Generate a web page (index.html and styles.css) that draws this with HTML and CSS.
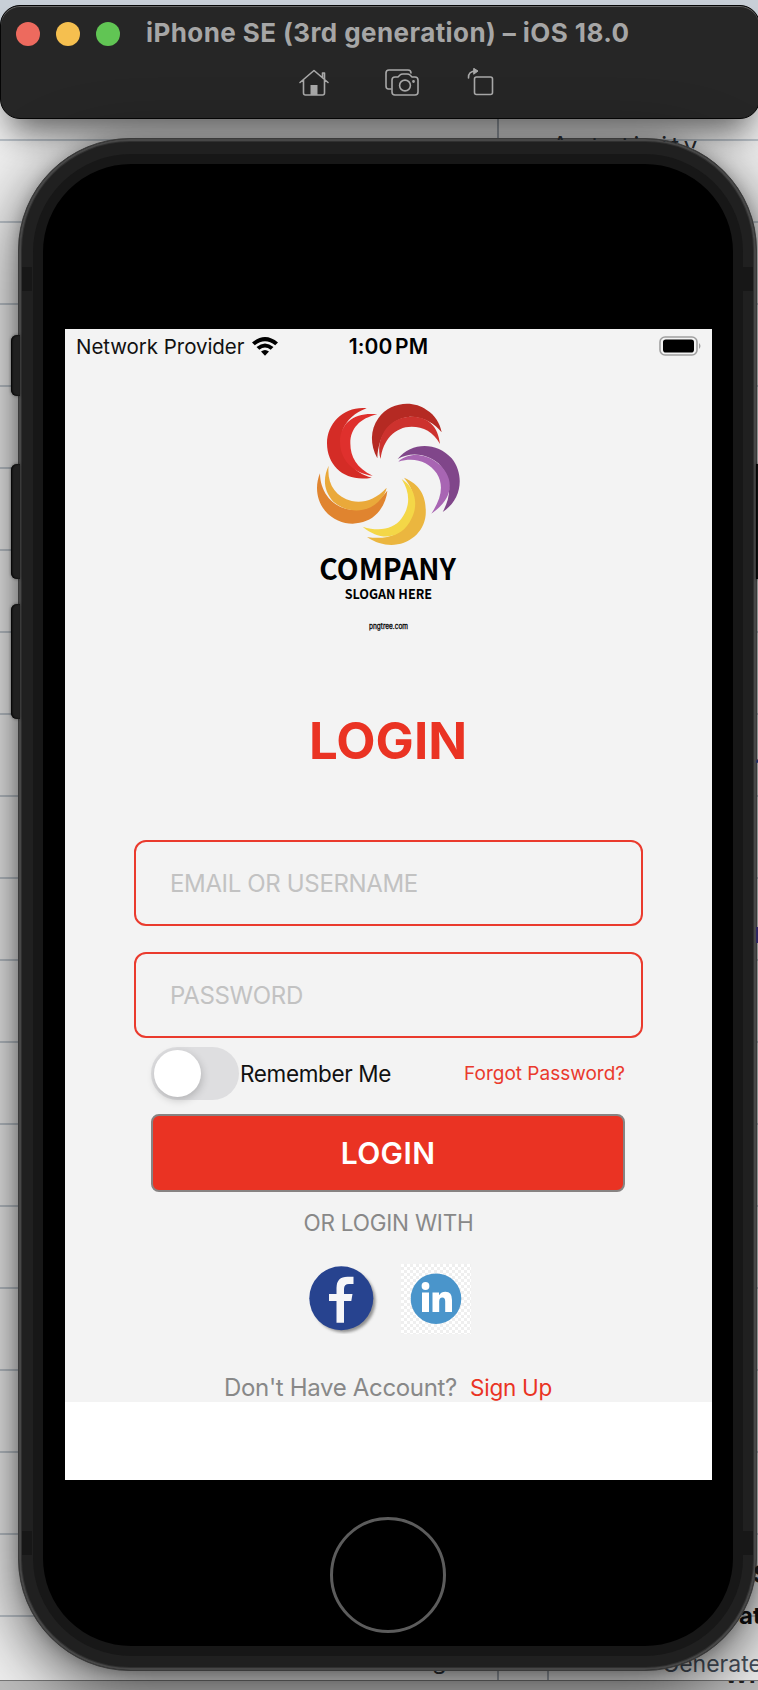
FILE: index.html
```html
<!DOCTYPE html>
<html lang="en">
<head>
<meta charset="utf-8">
<title>iPhone SE Simulator</title>
<link rel="stylesheet" href="styles.css">
</head>
<body>
<div class="desktop">
  <div class="backdrop">
    <i class="vline v1"></i><i class="vline v2"></i><i class="vline v3"></i>
    <span class="behind b4">at</span>
    <span class="behind b5">Generate</span>
    <span class="behind b6">g</span>
    <span class="strip"><span class="b7">Wh</span></span>
  </div>
  <span class="behind b1">Autotivity</span>
  <span class="behind b2">?</span>
  <span class="behind b3">S</span>
  <i class="mark"></i>
  <header class="toolbar">
    <div class="titlebar">
      <i class="dot red"></i><i class="dot yellow"></i><i class="dot green"></i>
      <span class="title">iPhone SE (3rd generation) – iOS 18.0</span>
    </div>
    <div class="tools">
      <svg width="32" height="30" viewBox="0 0 32 30" fill="none" stroke="#a9a9a9" stroke-width="1.6" stroke-linecap="round" stroke-linejoin="round"><path d="M2 14.500L16 2.500l14 12M5.500 12v13q0 2 2 2h17q2 0 2-2V12M24.500 9.500V5h2v6.500"/><path d="M12.500 17h7v10h-7z" fill="#a9a9a9" stroke="none"/></svg>
      <svg width="34" height="30" viewBox="0 0 34 30" fill="none" stroke="#a9a9a9" stroke-width="1.6" stroke-linecap="round" stroke-linejoin="round"><path d="M6 21H3.500Q1 21 1 18V5q0-3 3-3h19q3 0 3 3"/><path d="M10 9h3l2-2q1-1 3-1h4q2 0 3 1l2 2h3q3 0 3 3v12q0 3-3 3H10q-3 0-3-3V12q0-3 3-3z"/><circle cx="20" cy="17.500" r="5.400"/><circle cx="28.500" cy="13.500" r=".6" fill="#a9a9a9"/></svg>
      <svg width="28" height="30" viewBox="0 0 28 30" fill="none" stroke="#a9a9a9" stroke-width="1.6" stroke-linecap="round" stroke-linejoin="round"><path d="M1.500 10Q1 3 9 3"/><path d="M7 .5L11 3 7 6z" fill="#a9a9a9" stroke-width="1"/><rect x="7.500" y="9" width="18" height="17.500" rx="2"/></svg>
    </div>
  </header>
  <div class="phone">
    <i class="side k1"></i><i class="side k2"></i><i class="side k3"></i><i class="side k4"></i>
    <i class="band l t"></i><i class="band r t"></i><i class="band l b"></i><i class="band r b"></i>
    <div class="body">
      <main class="screen">
        <div class="status">
          <div class="carrier"><span class="net">Network Provider</span>
            <svg width="26" height="19" viewBox="0 0 26 19"><path d="M0 5.500Q13-5.500 26 5.500L23.200 8.300Q13 .2 2.800 8.300zM4.500 10Q13 3 21.500 10L18.700 12.800Q13 8.300 7.300 12.800zM9 14.500Q13 11.500 17 14.500L13 18.700z"/></svg>
          </div>
          <span class="time">1:00 PM</span>
          <svg class="battery" width="43" height="20" viewBox="0 0 43 20"><rect x="1" y="1" width="37" height="18" rx="5" fill="none" stroke="#a0a0a0" stroke-width="1.600"/><rect x="4" y="3.500" width="31" height="13" rx="2.800"/><path d="M40 7q3 3 0 6z" fill="#a0a0a0"/></svg>
        </div>
        <svg class="logo" viewBox="0 0 600 750">
          <path fill="#d42c26" d="M230 55C165 48 111 98 111 160C111 232 170 278 245 263C195 250 150 210 158 120C170 90 195 68 230 55"/>
          <path fill="#df302d" d="M262 73C200 65 150 95 150 155C150 210 190 250 248 257C200 235 181 200 181 160C181 115 210 85 262 73"/>
          <path fill="#b52a23" d="M262 205C240 165 240 120 265 85C300 35 370 30 410 60C435 75 450 100 455 127C435 100 400 80 360 80C305 85 265 130 262 205"/>
          <path fill="#cd322e" d="M272 207C255 150 290 80 365 80C415 80 445 110 450 162C430 125 400 110 365 110C315 110 278 150 272 207"/>
          <path fill="#80468a" d="M323 207C365 155 440 155 485 205C525 255 515 330 458 366C490 310 480 255 445 220C410 190 360 185 323 207"/>
          <path fill="#a865b3" d="M325 215C350 190 400 187 440 217C490 255 500 320 424 371C455 325 462 285 440 250C415 215 375 200 325 215"/>
          <path fill="#ebb63f" d="M342 263C395 285 410 325 407 375C400 450 310 495 231 441C290 450 330 435 355 395C380 350 378 305 342 263"/>
          <path fill="#f4d747" d="M335 267C378 295 385 345 365 385C340 440 280 462 218 410C265 425 310 420 335 385C360 350 362 310 335 267"/>
          <path fill="#e0842f" d="M90 250C75 285 78 330 105 362C150 415 225 410 262 370C280 350 290 325 292 302C260 345 215 365 170 357C120 345 90 300 90 250"/>
          <path fill="#eaa93a" d="M116 227C100 260 98 300 130 335C170 370 230 370 265 335C280 320 288 305 290 293C255 330 220 340 185 333C135 320 110 280 116 227"/>
          <text class="company" x="88" y="570" textLength="410" lengthAdjust="spacingAndGlyphs">COMPANY</text>
          <text class="slogan" x="164" y="626" textLength="262" lengthAdjust="spacingAndGlyphs">SLOGAN HERE</text>
          <text class="credit" x="237" y="716" textLength="117" lengthAdjust="spacingAndGlyphs">pngtree.com</text>
        </svg>
        <h1 class="heading">LOGIN</h1>
        <div class="fields">
          <div class="field"><span class="ph1">EMAIL OR USERNAME</span></div>
          <div class="field"><span class="ph2">PASSWORD</span></div>
        </div>
        <div class="options">
          <span class="switch"><i class="knob"></i></span>
          <span class="remember">Remember Me</span>
          <span class="forgot">Forgot Password?</span>
        </div>
        <div class="submit"><span class="submit-label">LOGIN</span></div>
        <div class="or"><span class="or-label">OR LOGIN WITH</span></div>
        <div class="social">
          <svg width="70" height="70" viewBox="0 0 70 70"><defs><filter id="s" x="-20%" y="-20%" width="140%" height="140%"><feGaussianBlur stdDeviation="1.6"/></filter></defs><circle cx="35" cy="37" r="31.500" fill="#777" opacity=".8" filter="url(#s)"/><circle cx="32.300" cy="34.300" r="32" fill="#27438f"/><path fill="#f6f6f8" d="M27.500 58.800V37H20v-7h7.500v-6q0-11.300 11-11.300h6V20H40q-5 0-5 5v5h8.500l-1.200 7H35v21.800z"/></svg>
          <svg width="70" height="70" viewBox="0 0 70 70"><defs><pattern id="c" width="6" height="6" patternUnits="userSpaceOnUse"><path fill="#fff" d="M0 0h6v6H0z"/><path fill="#efefef" d="M3 0h3v3H3zM0 3h3v3H0z"/></pattern></defs><path fill="url(#c)" d="M0 0h70v70H0z"/><circle cx="35" cy="34.700" r="25.300" fill="#4a95cb"/><circle cx="24.500" cy="22" r="3.900" fill="#fff"/><path fill="#fff" d="M21 28.500h7V48h-7zM31.500 28.500h6.500v2.700q2.200-3.400 6.500-3.400 6.500 0 6.500 8.200v12h-6.800V37.500q0-4-2.800-4-3.200 0-3.200 4V48h-6.700z"/></svg>
        </div>
        <div class="signup"><span class="ask">Don't Have Account?</span><span class="link">Sign Up</span></div>
      </main>
      <div class="home"></div>
    </div>
  </div>
</div>
</body>
</html>
```
FILE: styles.css
```css
* { box-sizing: border-box; }
body { margin: 0; font-family: Inter, "Liberation Sans", sans-serif; }
.desktop { display: flow-root; position: relative; width: 758px; height: 1690px; overflow: hidden; background: linear-gradient(#c9d0d8 0 60px, #efefef 60px); }
.backdrop { position: absolute; inset: 0; background: repeating-linear-gradient(transparent 0 57px, #bcc3ca 57px 59px, transparent 59px 82px); }
.vline { position: absolute; width: 2px; background: #a4abb3; top: 119px; height: 25px; left: 497px; }
.v2 { top: 1660px; height: 20px; }
.v3 { top: 1660px; height: 20px; left: 547px; }
.strip { position: absolute; left: 0; right: 0; top: 1680px; height: 10px; background: #bcbcbc; border-top: 1px solid #777; overflow: hidden; }
.b7 { position: absolute; left: 724px; top: -20px; font-weight: 700; font-size: 24px; line-height: 28px; color: #222; }
.behind { position: absolute; font-size: 24px; line-height: 28px; color: #30343a; white-space: nowrap; }
.b1 { left: 552px; top: 132px; z-index: 3; width: 160px; color: #1c2024; letter-spacing: 4.200px; clip-path: polygon(0 0, 100% 0, 100% 22px, 120px 10px, 90px 8px, 0 8px); }
.b2 { left: 755px; top: 754px; color: #1f2f60; z-index: 3; }
.b3 { left: 753px; top: 1561px; font-weight: 700; z-index: 3; color: #111; clip-path: inset(0 0 0 2px); }
.b4 { left: 739px; top: 1602px; font-weight: 700; color: #111; }
.b5 { left: 662px; top: 1650px; color: #47505c; font-size: 23px; }
.b6 { left: 432px; top: 1647px; }
.mark { position: absolute; z-index: 3; left: 756px; top: 927px; width: 2px; height: 16px; background: #2f2860; }

.toolbar { position: relative; width: 760px; height: 114px; margin-top: 5px; padding: 16px; border-radius: 20px; background: #262626; border: 1px solid #050505; box-shadow: inset 0 1px 0 #666, 0 22px 34px -10px rgba(0,0,0,.6); display: flex; flex-direction: column; gap: 17px; }
.titlebar { display: flex; align-items: center; height: 24px; gap: 16px; margin-left: -1px; }
.dot { width: 24px; height: 24px; border-radius: 50%; flex: none; }
.red { background: #ed6a5e; }
.yellow { background: #f5bf4f; }
.green { background: #61c554; }
.title { margin-left: 10px; margin-top: -3px; font-weight: 700; font-size: 26px; color: #a6a6a6; white-space: nowrap; letter-spacing: .42px; }
.tools { display: flex; align-items: center; margin-left: 281px; gap: 55px; height: 30px; margin-top: 5px; }
.tools svg:nth-child(3) { margin-left: -7px; }

.phone { position: relative; width: 739px; height: 1533px; margin: 19px 0 0 18px; border-radius: 112px; background: #202020; border: 1px solid #3a3a3a; padding: 3px; box-shadow: inset 0 0 0 2px #474747, inset 0 0 0 3px #303030, 0 16px 64px rgba(0,0,0,.68), 0 0 14px rgba(0,0,0,.2); }
.body { width: 710px; height: 1502px; margin: 12px 0 0 11px; border: 10px solid #171717; border-radius: 98px; background: #000; padding: 165px 0 0 22px; }
.side { position: absolute; left: -8px; width: 9px; background: #202020; border-radius: 6px 0 0 6px; box-shadow: inset 1px 0 2px #000, 0 0 3px rgba(0,0,0,.5); }
.k1 { top: 196px; height: 61px; }
.k2 { top: 325px; height: 115px; }
.k3 { top: 465px; height: 115px; }
.k4 { top: 325px; height: 115px; left: 737px; border-radius: 0; background: #141414; }
.band { position: absolute; width: 10px; height: 24px; background: #171717; }
.band.l { left: 3px; } .band.r { right: 3px; }
.band.t { top: 128px; } .band.b { top: 1392px; }
.screen { width: 647px; height: 1151px; background: linear-gradient(#f3f3f3 0 1073px, #fff 1073px); display: flex; flex-direction: column; overflow: hidden; }
.status { height: 35px; display: grid; grid-template-columns: 1fr auto 1fr; align-items: center; padding: 0 10px 0 11px; color: #111; flex: none; }
.carrier { display: flex; gap: 8px; align-items: center; }
.net { font-size: 20.500px; letter-spacing: -.05px; white-space: nowrap; }
.time { font-weight: 600; font-size: 21px; white-space: nowrap; word-spacing: -3px; color: #000; letter-spacing: .15px; margin-left: -1px; }
.battery { justify-self: end; margin-top: -2px; }
.logo { width: 200px; height: 250px; margin: 26px 0 0 225px; flex: none; }
.company { font: 700 88px "Noto Sans CJK SC", sans-serif; }
.slogan { font: 700 41px "Noto Sans CJK SC", sans-serif; }
.credit { font: 400 22px Inter, sans-serif; stroke: #000; stroke-width: .8px; }
.heading { margin: 71px 1px 0 0; height: 60px; line-height: 60px; font-size: 51px; font-weight: 700; color: #ea3323; text-align: center; }
.fields { margin: 69px 69px 0; display: grid; gap: 26px; }
.field { height: 86px; border: 2px solid #ea3a2d; border-radius: 12px; padding-left: 34px; display: flex; align-items: center; font-size: 24px; letter-spacing: -.35px; color: #c2c2c2; }
.options { display: flex; align-items: center; margin: 9px 87px 0 86px; height: 53px; white-space: nowrap; flex: none; }
.switch { width: 88px; height: 53px; border-radius: 27px; background: #dedee0; padding: 3px; flex: none; }
.knob { display: block; width: 47px; height: 47px; border-radius: 50%; background: #fff; box-shadow: 1px 3px 8px rgba(0,0,0,.2); }
.remember { font-size: 22.500px; margin: -1px 0 0 1px; color: #111; letter-spacing: -.35px; }
.forgot { margin-left: auto; color: #ea3a2d; font-size: 19px; }
.submit { margin: 14px 87px 0 86px; height: 78px; border: 2px solid #878382; border-radius: 8px; background: #ea3323; color: #fff; display: flex; align-items: center; justify-content: center; font-size: 30px; font-weight: 600; letter-spacing: .4px; flex: none; }
.or { height: 30px; line-height: 30px; margin-top: 16px; text-align: center; font-size: 22.500px; color: #888; letter-spacing: -.22px; }
.social { display: flex; gap: 22px; margin: 26px 0 0 244px; }
.signup { display: flex; align-items: center; height: 30px; margin: 38px 0 0 159px; gap: 13px; font-size: 24px; color: #888; white-space: nowrap; }
.ask { letter-spacing: -.33px; }
.link { color: #ea3323; font-size: 22.500px; letter-spacing: -.25px; }
.home { width: 116px; height: 116px; border: 3px solid #5c5c5c; border-radius: 50%; margin: 37px 0 0 265px; }
```
